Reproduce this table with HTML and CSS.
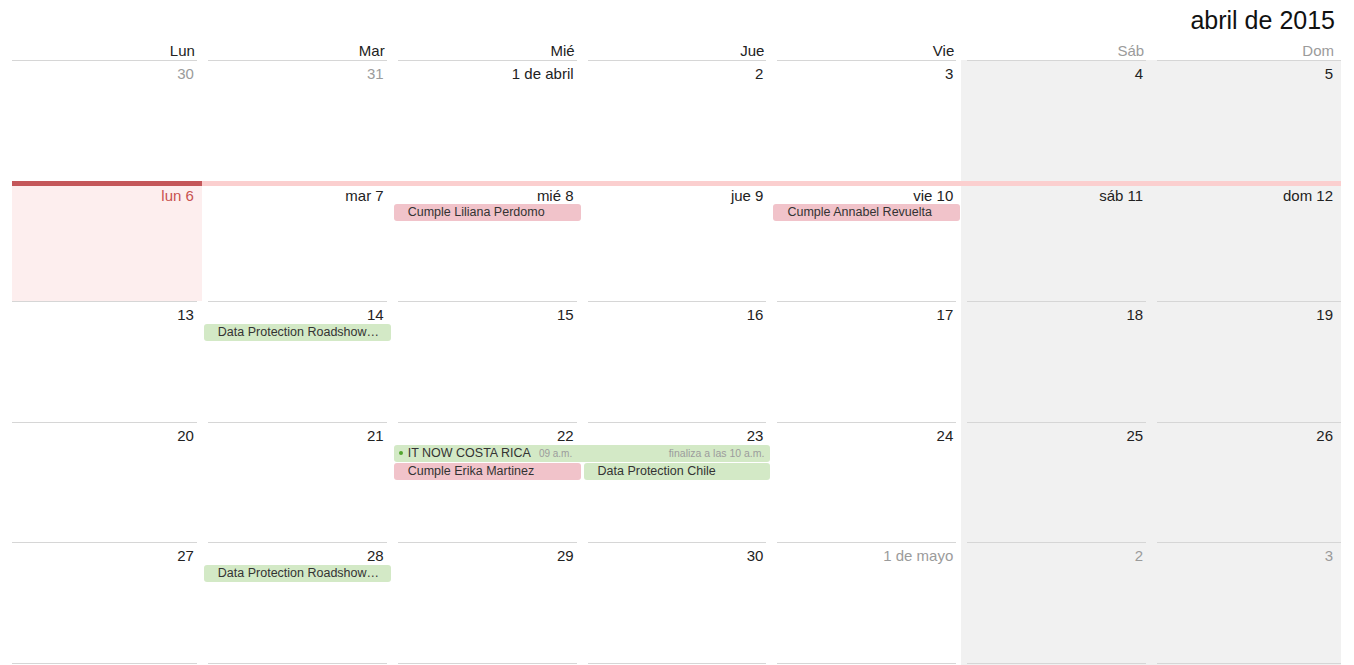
FILE: index.html
```html
<!DOCTYPE html>
<html lang="es">
<head>
<meta charset="utf-8">
<title>abril de 2015</title>
<link rel="stylesheet" href="styles.css">
</head>
<body>
<div class="cal">
  <header class="head">
    <div class="title">abril de 2015</div>
    <div class="dow">
      <div>Lun</div><div>Mar</div><div>Mié</div><div>Jue</div><div>Vie</div><div class="wk">Sáb</div><div class="wk">Dom</div>
    </div>
  </header>

  <section class="week">
    <div class="day c1"></div><div class="day c2"></div><div class="day c3"></div><div class="day c4"></div><div class="day c5"></div><div class="day c6 we"></div><div class="day c7 we"></div>
    <div class="num c1 muted">30</div><div class="num c2 muted">31</div><div class="num c3">1 de abril</div><div class="num c4">2</div><div class="num c5">3</div><div class="num c6">4</div><div class="num c7">5</div>
  </section>

  <section class="week now">
    <div class="day c1 today"></div><div class="day c2"></div><div class="day c3"></div><div class="day c4"></div><div class="day c5"></div><div class="day c6 we"></div><div class="day c7 we"></div>
    <div class="num c1 tnum">lun 6</div><div class="num c2">mar 7</div><div class="num c3">mié 8</div><div class="num c4">jue 9</div><div class="num c5">vie 10</div><div class="num c6">sáb 11</div><div class="num c7">dom 12</div>
    <div class="ev pink c3">Cumple Liliana Perdomo</div>
    <div class="ev pink c5">Cumple Annabel Revuelta</div>
  </section>

  <section class="week">
    <div class="day c1"></div><div class="day c2"></div><div class="day c3"></div><div class="day c4"></div><div class="day c5"></div><div class="day c6 we"></div><div class="day c7 we"></div>
    <div class="num c1">13</div><div class="num c2">14</div><div class="num c3">15</div><div class="num c4">16</div><div class="num c5">17</div><div class="num c6">18</div><div class="num c7">19</div>
    <div class="ev green c2">Data Protection Roadshow…</div>
  </section>

  <section class="week">
    <div class="day c1"></div><div class="day c2"></div><div class="day c3"></div><div class="day c4"></div><div class="day c5"></div><div class="day c6 we"></div><div class="day c7 we"></div>
    <div class="num c1">20</div><div class="num c2">21</div><div class="num c3">22</div><div class="num c4">23</div><div class="num c5">24</div><div class="num c6">25</div><div class="num c7">26</div>
    <div class="ev green timed c3 s2"><span class="dot"></span><span class="etitle">IT NOW COSTA RICA</span><span class="time">09 a.m.</span><span class="end">finaliza a las 10 a.m.</span></div>
    <div class="ev pink r2 c3">Cumple Erika Martinez</div>
    <div class="ev green r2 c4">Data Protection Chile</div>
  </section>

  <section class="week last">
    <div class="day c1"></div><div class="day c2"></div><div class="day c3"></div><div class="day c4"></div><div class="day c5"></div><div class="day c6 we"></div><div class="day c7 we"></div>
    <div class="num c1">27</div><div class="num c2">28</div><div class="num c3">29</div><div class="num c4">30</div><div class="num c5 muted">1 de mayo</div><div class="num c6 muted">2</div><div class="num c7 muted">3</div>
    <div class="ev green c2">Data Protection Roadshow…</div>
  </section>
</div>
</body>
</html>
```

FILE: styles.css
```css
html, body {
  margin: 0;
  padding: 0;
  background: #fff;
}

body {
  font-family: "Liberation Sans", Arial, Helvetica, sans-serif;
  color: #222;
}

.cal {
  height: 665px;
  box-sizing: border-box;
  padding: 0 13px 0 12px;
  display: grid;
  grid-template-rows: 60px repeat(5, 1fr) 2px;
  overflow: hidden;
}

.head {
  display: flex;
  flex-direction: column;
}

.title {
  padding: 5px 6px 0 0;
  font-size: 25px;
  line-height: 30px;
  text-align: right;
  color: #111;
}

.dow {
  margin-top: 6px;
  display: grid;
  grid-template-columns: repeat(7, 1fr);
  font-size: 15px;
  line-height: 19px;
}

.dow div {
  text-align: right;
  padding-right: 7px;
  color: #222;
}

.dow .wk {
  color: #9b9b9b;
}

.week {
  display: grid;
  grid-template-columns: repeat(7, 1fr);
  grid-template-rows: 1px 22px auto auto 1fr;
  min-height: 0;
}

.week.last {
  margin-bottom: -2px;
}

.c1 { grid-column-start: 1; }
.c2 { grid-column-start: 2; }
.c3 { grid-column-start: 3; }
.c4 { grid-column-start: 4; }
.c5 { grid-column-start: 5; }
.c6 { grid-column-start: 6; }
.c7 { grid-column-start: 7; }
.s2 { grid-column-end: span 2; }

.day {
  grid-row: 1 / -1;
  display: flex;
  flex-direction: column;
}

.day::before {
  content: "";
  border-top: 1px solid #d6d6d6;
  margin: 0 5px 0 6px;
}

.day.c1::before { margin-left: 0; }
.day.c7::before { margin-right: 0; }

.last .day::after {
  content: "";
  margin: auto 5px 1px 6px;
  border-top: 1px solid #d6d6d6;
}

.last .day.c1::after { margin-left: 0; }
.last .day.c7::after { margin-right: 0; }

.we {
  background: #f1f1f1;
}

.now {
  grid-template-rows: 5px 18px auto auto 1fr;
}

.now .day::before {
  border-top: 5px solid #fbcfcf;
  margin: 0;
}

.now .day.today::before {
  border-top-color: #c4575a;
}

.today {
  background: #fdeeee;
}

.num {
  grid-row: 2;
  text-align: right;
  padding: 4px 8px 0 0;
  font-size: 15px;
  line-height: 18px;
  color: #222;
  white-space: nowrap;
}

.now .num {
  padding-top: 1px;
  line-height: 17px;
}

.num.muted {
  color: #9b9b9b;
}

.num.tnum {
  color: #c8514f;
}

.ev {
  grid-row: 3;
  margin: 0 1px 1px 2px;
  height: 17px;
  line-height: 17px;
  border-radius: 3px;
  padding-left: 14px;
  font-size: 12.5px;
  color: #333;
  white-space: nowrap;
  overflow: hidden;
}

.ev.r2 {
  grid-row: 4;
}

.pink {
  background: #f1c3ca;
}

.green {
  background: #d3e9c6;
}

.ev.timed {
  display: flex;
  align-items: center;
  padding-left: 5px;
  padding-right: 6px;
}

.dot {
  flex: none;
  width: 4px;
  height: 4px;
  border-radius: 50%;
  background: #52a52e;
  margin-right: 5px;
}

.time {
  margin-left: 8px;
  font-size: 10px;
  color: #9c9c9c;
}

.end {
  margin-left: auto;
  font-size: 10.5px;
  color: #9c9c9c;
}
```
